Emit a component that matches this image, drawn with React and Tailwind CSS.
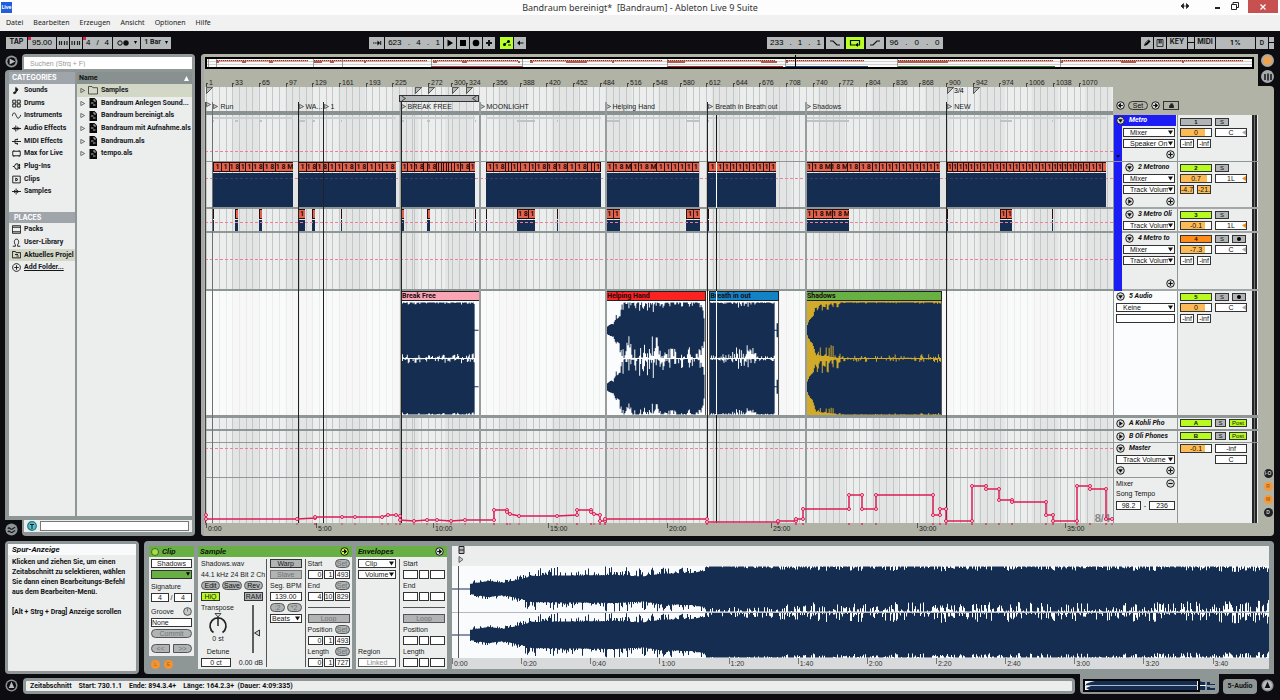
import React, { useState } from 'react';

// timeline units, shared by the overview, the rulers and every lane
const START = 205;
const SPAN = 908;
const at = (x) => `${((x - START) / SPAN) * 100}%`;
const len = (w) => `${(w / SPAN) * 100}%`;

const ones = (n, w = 6.67) => Array(n).fill(w);

const metronomeClips = [
  { from: 213, parts: [8, 7.5, 10, 6, 6.5, 10.5, 13, 18.5] },
  { from: 298, parts: [8, 9.5, 12, 7.5, 6.5, 13, 12.5, 8, 7, 14] },
  { from: 401, parts: [6.5, 7.5, 9.5, 3.5, 10, 2, 2, 2, 2, 2, 2, 3, 5.5, 10, 6.5] },
  { from: 486, parts: [7, 13, 2, 2, 6, 3, 8.5, 6.5, 12, 10, 11.5, 8.5, 12.5, 3, 3, 6] },
  { from: 605, parts: [8, 19, 7, 19, 7.5, ...ones(5)] },
  { from: 708, parts: [8.5, ...ones(9, 6.6)] },
  { from: 805, parts: [7, 20, 16.5, 13, 13, ...ones(10, 6.6)] },
  { from: 946.5, parts: [...ones(5, 5.3), ...ones(12), ...ones(6, 5), ...ones(3), 2.5] },
];

const oliClips = [
  { from: 213, parts: [1] },
  { from: 235, parts: [3.5] },
  { from: 259, parts: [3] },
  { from: 298, parts: [7] },
  { from: 312, parts: [3.5] },
  { from: 341, parts: [1] },
  { from: 401, parts: [3.5] },
  { from: 427, parts: [3.5] },
  { from: 475, parts: [1] },
  { from: 486, parts: [1] },
  { from: 517, parts: [11, 7.5] },
  { from: 557, parts: [1] },
  { from: 605, parts: [7.5, 7.5] },
  { from: 686, parts: [7, 7] },
  { from: 708, parts: [1] },
  { from: 805, parts: [7, 20, 17] },
  { from: 946.5, parts: [1] },
  { from: 999.5, parts: [6.5, 6.5] },
  { from: 1052, parts: [1] },
];

// envelope points: [position, amplitude, roughness]; negative roughness gives peaks instead of dips
const audioClips = [
  {
    name: 'Break Free', from: 400, to: 479.5, bar: 'bg-[#f9a5b6]', fill: 'bg-[#fbfcfd]', mini: 'bg-[#c0394a]', seed: 3,
    env: [[0, 0.02, 0], [0.01, 1, 0.08], [0.5, 1.02, 0.08], [0.94, 1.01, 0.1], [0.95, 0.02, 0], [1, 0.02, 0]],
  },
  {
    name: 'Helping Hand', from: 605, to: 705.5, bar: 'bg-[#fb2222]', fill: 'bg-[#fbfcfd]', mini: 'bg-[#b32025]', seed: 11,
    env: [[0, 0.12, 0.1], [0.03, 0.2, 0.1], [0.07, 0.25, 0.2], [0.09, 0.36, -0.7], [0.14, 0.5, -0.8], [0.16, 1, 0.4], [0.5, 1, 0.4], [0.62, 1.04, 0.2], [0.9, 1.02, 0.2], [0.97, 0.95, 0.2], [0.985, 0.6, 0.3], [1, 0.1, 0]],
  },
  {
    name: 'Breath in out', from: 708.5, to: 779, bar: 'bg-[#1283c6]', fill: 'bg-[#fbfcfd]', mini: 'bg-[#1d4f8f]', seed: 23,
    env: [[0, 1, 0.05], [0.3, 1.02, 0.1], [0.4, 1, 0.25], [0.6, 1, 0.22], [0.7, 1.02, 0.06], [0.93, 1, 0.05], [0.935, 0.02, 0], [0.96, 0.02, 0], [0.965, 0.25, 0], [0.99, 0.25, 0], [1, 0, 0]],
  },
  {
    name: 'Shadows', from: 805, to: 942, bar: 'bg-[#68b043]', fill: 'bg-[#d2ab28]', mini: 'bg-[#2c7a2c]', seed: 37,
    env: [[0, 0.1, 0.1], [0.02, 0.36, 0.1], [0.05, 0.5, -0.3], [0.07, 0.9, 0.25], [0.24, 1, 0.25], [0.25, 1.04, 0.07], [1, 1.02, 0.08]],
  },
];

const locators = [
  { x: 205.5, name: '', line: 'w-px bg-[#444]' },
  { x: 212.5, name: 'Run', line: 'w-px bg-[#6c7272]' },
  { x: 297.5, name: 'WA...', line: 'w-px bg-[#222]' },
  { x: 322.5, name: '1', line: 'w-px bg-[#222]' },
  { x: 399.5, name: 'BREAK FREE', line: 'w-[2px] border-l border-[#9ba0a0] bg-[#222]' },
  { x: 478.5, name: 'MOONLIGHT', line: 'w-[2px] bg-[#979d9d]' },
  { x: 604.5, name: 'Helping Hand', line: 'w-[2px] bg-[#979d9d]' },
  { x: 707.3, name: 'Breath in Breath out', line: 'w-px bg-[#222]' },
  { x: 804.5, name: 'Shadows', line: 'w-[2px] bg-[#979d9d]' },
  { x: 946.3, name: 'NEW', line: 'w-px bg-[#222]' },
];

const bars = [
  [206, 1], [232, 33], [259, 65], [286, 97], [312, 129], [339, 161], [366, 193], [392, 225],
  [428, 272], [451, 300], [466, 324], [493, 356], [520, 388], [546, 420], [573, 452], [600, 484],
  [627, 516], [653, 548], [680, 580], [706, 612], [733, 644], [759, 676], [786, 708], [813, 740],
  [839, 772], [866, 804], [893, 836], [919, 868], [946, 900], [973, 942], [999, 974], [1026, 1006],
  [1053, 1038], [1079, 1070],
];

const times = [[206, '0:00'], [316, '5:00'], [433, '10:00'], [548, '15:00'], [667, '20:00'], [771, '25:00'], [917, '30:00'], [1065, '35:00']];

const signatureMarks = [206, 415, 428, 452, 466, 946.5, 973];

const tempo = [
  [206, 515], [206, 519], [297, 519], [315, 518], [315, 517], [342, 517], [355, 517], [382, 517], [388, 515],
  [396, 515], [400, 516], [400, 520], [414, 521], [427, 520], [437, 520], [451, 521], [465, 520], [494, 520],
  [494, 510], [507, 510], [507, 512], [510, 514], [519, 516], [557, 516], [577, 515], [577, 510], [591, 510],
  [591, 512], [594, 514], [600, 515], [600, 521], [605, 521], [605, 519], [707, 519], [707, 522], [778, 522],
  [778, 521], [796, 521], [796, 519], [803, 519], [803, 509], [849, 509], [849, 495], [862, 495], [862, 509],
  [876, 509], [876, 495], [933, 495], [933, 515], [940, 515], [940, 509], [946, 509], [946, 521], [972, 521],
  [972, 486], [986, 486], [986, 489], [999, 489], [999, 500], [1012, 500], [1012, 502], [1046, 502], [1046, 515],
  [1053, 515], [1053, 521], [1077, 521], [1077, 486], [1090, 486], [1090, 489], [1106, 489], [1106, 519], [1112, 519],
];

// grid restarts at every meter change
const gridLines = [[205.7, 414], [414, 428], [428, 452], [452, 466], [466, 946.5], [946.5, 973.5], [973.5, 1113]].flatMap(([a, b]) => {
  const out = [];
  for (let x = a; x < b - 1; x += 6.667) out.push(x);
  return out;
});

const random = (seed) => {
  let s = seed * 7919 + 17;
  return () => {
    s = (s * 16807) % 2147483647;
    return s / 2147483647;
  };
};

const envelopeAt = (env, t) => {
  let i = 1;
  while (i < env.length - 1 && env[i][0] < t) i += 1;
  const [t0, a0, r0] = env[i - 1];
  const [t1, a1, r1] = env[i];
  const k = Math.min(1, Math.max(0, (t - t0) / (t1 - t0)));
  return [a0 + (a1 - a0) * k, r0 + (r1 - r0) * k];
};

// the edge that faces the other channel is drawn rougher
const wavePath = (env, seed, width, mid, half, inner) => {
  const rnd = random(seed);
  const edge = (amp, rough, k) => {
    const r = rnd();
    const v = rough < 0 ? amp * (1 - rough * r ** 4) : amp * (1 - rough * k * r ** 3);
    return Math.min(1, v) * half;
  };
  let top = '';
  let bottom = '';
  for (let x = 0; x < width; x += 1) {
    const [amp, rough] = envelopeAt(env, x / width);
    const up = mid - edge(amp, rough, inner === 'top' ? 2 : 1);
    const down = mid + edge(amp, rough, inner === 'bottom' ? 2 : 1);
    top += `L${x} ${up.toFixed(1)}L${x + 1} ${up.toFixed(1)}`;
    bottom = `L${x + 1} ${down.toFixed(1)}L${x} ${down.toFixed(1)}${bottom}`;
  }
  return `M0 ${mid}${top}${bottom}Z`;
};

const Waveform = ({ env, seed, width, height, className }) => (
  <svg viewBox={`0 0 ${width} ${height}`} preserveAspectRatio="none" className={className} aria-hidden="true">
    <path d={wavePath(env, seed, width, height / 4, height / 4 - 0.5, 'bottom')} fill="#142d50" />
    <path d={wavePath(env, seed, width, (height * 3) / 4, height / 4 - 0.5, 'top')} fill="#142d50" />
  </svg>
);

const Fold = ({ dir = 'down', label, fill = '#d4d7d7' }) => (
  <button aria-label={label} className="size-[9px] shrink-0">
    <svg viewBox="0 0 10 10" className="size-full">
      <circle cx="5" cy="5" r="4.2" fill={fill} stroke="#1b1b1b" strokeWidth="1.1" />
      {dir === 'down' && <path d="M2.4 3.6h5.2L5 7.6z" fill="#111" />}
      {dir === 'right' && <path d="M3.6 2.4v5.2L7.6 5z" fill="#111" />}
      {dir === 'plus' && <path d="M5 2.5v5M2.5 5h5" stroke="#111" strokeWidth="1.2" />}
      {dir === 'minus' && <path d="M2.5 5h5" stroke="#111" strokeWidth="1.2" />}
      {dir === 'arrow' && <path d="M2.3 5h4M5 2.8L7.4 5 5 7.2z" stroke="#111" strokeWidth="1" fill="#111" />}
      {dir === 'back' && <path d="M7.7 5h-4M5 2.8L2.6 5 5 7.2z" stroke="#111" strokeWidth="1" fill="#111" />}
    </svg>
  </button>
);

const Select = ({ value, label, className = '' }) => (
  <div className={`relative h-[9px] ${className}`}>
    <select aria-label={label} className="block h-full w-full appearance-none border border-[#333] bg-white px-1.5 leading-[7px]">
      <option>{value}</option>
    </select>
    <svg viewBox="0 0 6 6" className="pointer-events-none absolute top-[2px] right-[2px] size-[5px]">
      <path d="M0 0.5h6L3 5.5z" fill="#111" />
    </svg>
  </div>
);

const Field = ({ value = '', label, tone = 'bg-white', className = '' }) => (
  <input aria-label={label} defaultValue={value} className={`h-[9px] min-w-0 border border-[#333] leading-[7px] ${tone} ${className}`} />
);

/* ---------- top bars ---------- */

const TitleBar = () => (
  <header className="flex h-[15px] items-center bg-[#fdfdfd] font-['Noto_Sans',sans-serif]">
    <div className="flex-1">
      <span className="ml-px flex h-[11px] w-[11px] items-center justify-center bg-[#1f5fdc] text-[5px] font-bold text-white">Live</span>
    </div>
    <h1 className="text-[9px] leading-[15px] whitespace-pre text-[#333]">{'Bandraum bereinigt*  [Bandraum] - Ableton Live 9 Suite'}</h1>
    <div className="flex flex-1 items-start justify-end self-stretch">
      <svg viewBox="0 0 8 6" className="mt-[3px] mr-[26px] h-[6px] w-[8px]"><path d="M0 3l2.5-2.500v5zM8 3L5.500.5v5zM2 3h4" fill="#222" stroke="#222" strokeWidth="0.8" /></svg>
      <button aria-label="Minimieren" className="mt-[7px] mr-[11px] h-[2px] w-[5px] bg-[#222]" />
      <button aria-label="Wiederherstellen" className="mt-[2px] mr-[9px] size-[8px]">
        <svg viewBox="0 0 8 8"><path d="M.5 2.500h5v5h-5zM2 2V.5h5.500v5H6" fill="none" stroke="#222" /></svg>
      </button>
      <button aria-label="Schließen" className="mr-[2px] flex h-[13px] w-[30px] items-center justify-center bg-[#c75050]">
        <svg viewBox="0 0 6 6" className="size-[6px]"><path d="M.5.5l5 5M5.500.5l-5 5" stroke="#fff" strokeWidth="1.2" /></svg>
      </button>
    </div>
  </header>
);

const MenuBar = () => (
  <nav className="flex h-4 items-center gap-[10px] bg-[#f1f1f1] pl-1.5 font-['Noto_Sans',sans-serif] text-[7px] text-[#1a1a1a]">
    {['Datei', 'Bearbeiten', 'Erzeugen', 'Ansicht', 'Optionen', 'Hilfe'].map((m) => (
      <button key={m}>{m}</button>
    ))}
  </nav>
);

const Cell = ({ className = '', children, ...rest }) => (
  <button className={`flex h-3 shrink-0 items-center justify-center text-[#15171a] ${className}`} {...rest}>
    {children}
  </button>
);

const Digits = ({ values, className }) => (
  <div className={`flex h-3 shrink-0 items-center justify-around bg-[#b5b9ba] text-[8px] ${className}`}>
    {values.map((v, i) => (
      <span key={i}>{v}</span>
    ))}
  </div>
);

const Transport = () => {
  const [loop, setLoop] = useState(true);
  const grey = 'bg-[#b5b9ba]';
  return (
    <div className="flex h-[22px] items-center pt-[1px] pr-1.5 pl-1.5 text-[8px]">
      <div className="flex gap-px">
        <Cell className={`${grey} w-[21px] font-['Inter',sans-serif] text-[7px] font-bold`}>TAP</Cell>
        <label className="relative">
          <input aria-label="Tempo" defaultValue="95.00" className="block h-3 w-[28px] bg-[#b5b9ba] pl-[4px] text-[8px]" />
          <i className="absolute top-0 left-0 size-[3px] bg-[#d8214f]" />
        </label>
        <Cell className={`${grey} w-3`} aria-label="Nudge Down"><svg viewBox="0 0 12 12" className="size-3"><path d="M2.500 4v4M4.500 4v4M7.500 4v4M10 4v4" stroke="#222" strokeWidth="1.200" /></svg></Cell>
        <Cell className={`${grey} w-3`} aria-label="Nudge Up"><svg viewBox="0 0 12 12" className="size-3"><path d="M2 4v4M4.500 4v4M7.500 4v4M9.500 4v4" stroke="#222" strokeWidth="1.200" /></svg></Cell>
        <div className="relative">
          <Digits values={['4', '/', '4']} className="w-[29px]" />
          <i className="absolute top-0 left-0 size-[3px] bg-[#d8214f]" />
        </div>
        <Cell className={`${grey} w-[27px] gap-[5px]`} aria-label="Metronom">
          <svg viewBox="0 0 12 6" className="h-[6px] w-[12px]"><circle cx="3" cy="3" r="2.200" fill="none" stroke="#111" /><circle cx="9" cy="3" r="2.700" fill="#111" /></svg>
          <svg viewBox="0 0 6 6" className="size-[3px]"><path d="M0 0h6L3 6z" /></svg>
        </Cell>
        <Cell className={`${grey} w-[30px] gap-[4px] font-['Roboto',sans-serif] text-[7px] font-bold`}>
          1 Bar<svg viewBox="0 0 6 6" className="size-[3px]"><path d="M0 0h6L3 6z" /></svg>
        </Cell>
      </div>
      <div className="flex-[198]" />
      <div className="flex gap-px">
        <Cell className={`${grey} w-[15px]`} aria-label="Follow"><svg viewBox="0 0 10 8" className="h-2 w-[10px]"><path d="M1 4h5" stroke="#111" strokeDasharray="1.500 .6" /><path d="M5.500 1.500L8 4 5.500 6.500z" /><path d="M8.700 2v4" stroke="#111" /></svg></Cell>
        <Digits values={['623', '.', '4', '.', '1']} className="w-[58px]" />
        <Cell className={`${grey} w-[12px]`} aria-label="Play"><svg viewBox="0 0 8 8" className="size-2"><path d="M1.500.5v7L7 4z" /></svg></Cell>
        <Cell className={`${grey} w-[12px]`} aria-label="Stop"><svg viewBox="0 0 8 8" className="size-2"><path d="M1 1h6v6H1z" /></svg></Cell>
        <Cell className={`${grey} w-[12px]`} aria-label="Record"><svg viewBox="0 0 8 8" className="size-2"><circle cx="4" cy="4" r="3.300" /></svg></Cell>
        <Cell className={`${grey} w-[12px]`} aria-label="Overdub"><svg viewBox="0 0 8 8" className="size-2"><path d="M4 1v6M1 4h6" stroke="#111" strokeWidth="2" /></svg></Cell>
        <Cell className="ml-1 w-[13px] bg-[#b6ff29]" aria-label="Automation Arm"><svg viewBox="0 0 10 8" className="h-2 w-[10px]"><path d="M2 5.500L6.500 2.500" stroke="#111" strokeWidth=".8" /><circle cx="2.500" cy="5.500" r="1.500" /><circle cx="6.500" cy="2.500" r="1.500" /><path d="M6 6h3" stroke="#111" /></svg></Cell>
        <Cell className={`${grey} w-[12px]`} aria-label="Automation Re-Enable"><svg viewBox="0 0 8 8" className="size-2"><path d="M7.500 4H3" stroke="#111" /><path d="M4 1.500L1 4l3 2.500z" /></svg></Cell>
      </div>
      <div className="flex-[241]" />
      <div className="flex gap-0.5">
        <Digits values={['233', '.', '1', '.', '1']} className="w-[57px]" />
        <Cell className={`${grey} w-[18px]`} aria-label="Punch In"><svg viewBox="0 0 12 6" className="h-[6px] w-3"><path d="M1 1h3l4 4h3" fill="none" stroke="#111" strokeWidth="1.200" /></svg></Cell>
        <Cell className={`${loop ? 'bg-[#b6ff29]' : 'bg-[#b5b9ba]'} w-[18px]`} aria-label="Loop" onClick={() => setLoop(!loop)}>
          <svg viewBox="0 0 12 8" className="h-2 w-3"><path d="M6 6H1.500V1.500h9V6H8" fill="none" stroke="#111" strokeWidth="1.200" /><path d="M9 3.800v4L5.800 6z" /></svg>
        </Cell>
        <Cell className={`${grey} w-[18px]`} aria-label="Punch Out"><svg viewBox="0 0 12 6" className="h-[6px] w-3"><path d="M1 5h3l4-4h3" fill="none" stroke="#111" strokeWidth="1.200" /></svg></Cell>
        <Digits values={['96', '.', '0', '.', '0']} className="w-[57px]" />
      </div>
      <div className="flex-[198]" />
      <div className="flex items-center gap-px font-['Inter',sans-serif] text-[7px] font-bold">
        <Cell className={`${grey} w-3`} aria-label="Draw"><svg viewBox="0 0 8 8" className="size-2"><path d="M1 7l1-3 3.500-3.500 2 2L4 6z" /><path d="M2.500 4.500L5.500 1.700" stroke="#ccc" strokeWidth=".6" /></svg></Cell>
        <Cell className={`${grey} w-3`} aria-label="Computer MIDI Keyboard"><svg viewBox="0 0 8 8" className="size-2"><path d="M1 .5h6v7H1z" fill="none" stroke="#111" strokeWidth=".8" /><path d="M3.200.5v4M5 .5v4" stroke="#111" strokeWidth="1.200" /></svg></Cell>
        <Cell className={`${grey} w-5`}>KEY</Cell>
        <div className="flex w-[6px] flex-col gap-px"><i className="h-[5px] bg-[#b5b9ba]" /><i className="h-[6px] bg-[#b5b9ba]" /></div>
        <Cell className={`${grey} w-5`}>MIDI</Cell>
        <div className="flex h-3 w-[39px] items-center justify-center bg-[#b5b9ba] text-[6px]">1 %</div>
        <Cell className={`${grey} w-3 text-[6px]`}>D</Cell>
        <div className="flex w-[5px] flex-col gap-px"><i className="h-[5px] bg-[#b5b9ba]" /><i className="h-[6px] bg-[#b5b9ba]" /></div>
      </div>
    </div>
  );
};

/* ---------- browser ---------- */

const categoryIcons = {
  Sounds: <path d="M5 9V2l3 2.500-1 2M5 9c0 1.300-3 1.700-3 .2S5 7.300 5 9z" fill="#111" />,
  Drums: <path d="M1 1.500h4v4H1zM7 1.500h4v4H7zM1 6.700h4v4H1zM7 6.700h4v4H7z" />,
  Instruments: <path d="M0 7c2-6 3.500-6 5.500-1S9 11 12 5" />,
  'Audio Effects': <path d="M0 6h12M3 4v4M5 2v8M7 3.500v5M9 4.500v3" />,
  'MIDI Effects': <path d="M0 6h12M4 3.500h4M4 8.500h4M4 3.500v5M7 2v2M7 8v2.500" />,
  'Max for Live': <path d="M1 3h10v6H1zM2.500 1.500V3M9.500 1.500V3M2.500 9v1.500M9.500 9v1.500" />,
  'Plug-Ins': <path d="M1 6h2l2-3.500h3v7H5L3 6M8 4.200h3M8 7.800h3M10 2.500v7" />,
  Clips: <path d="M1 1.500h10v9H1zM5 4v4l3-2z" />,
  Samples: <path d="M0 6h12M3.500 4v4M5.500 2v8M7.500 4v4" />,
  Packs: <path d="M.5 1h11v10H.5zM.5 3h11M.5 9h11" />,
  'User-Library': <path d="M1 11h3.500V9C2.500 7 2.500 1.500 6 1.500S9.500 7 7.500 9v2H11" />,
  'Aktuelles Projel': <path d="M.5 2h4l1 1.500h6V10.500H.5zM4 6h4M6 8h3" />,
  'Add Folder...': <path d="M6 3v6M3 6h6M6 .8a5.200 5.200 0 1 0 .01 0z" />,
};

const BrowserRow = ({ name, selected, underline }) => (
  <li className={`flex flex-1 items-center ${selected ? 'bg-[#d3d7c6]' : ''}`}>
    <a href="#browser" className="flex items-center gap-[3px] pl-[3px] whitespace-nowrap">
      <svg viewBox="0 0 12 12" className="size-[9px] shrink-0" fill="none" stroke="#111" strokeWidth="1.200">{categoryIcons[name]}</svg>
      <span className={underline ? 'underline' : ''}>{name}</span>
    </a>
  </li>
);

const files = ['Samples', 'Bandraum Anlegen Sound...', 'Bandraum bereinigt.als', 'Bandraum mit Aufnahme.als', 'Bandraum.als', 'tempo.als'];

const Browser = () => (
  <aside className="flex w-[190px] shrink-0 flex-col font-['Roboto',sans-serif] text-[7px] font-bold text-[#14161a]">
    <div className="flex h-[16px]">
      <button aria-label="Browser ausblenden" className="mt-[-1px] w-[17px]">
        <svg viewBox="0 0 14 14" className="size-[13px]"><circle cx="7" cy="7" r="6.500" fill="#8d9494" /><circle cx="7" cy="7" r="4.800" fill="#0d0c11" stroke="#bbb" strokeWidth=".6" /><path d="M5 3.800v6.400L11 7z" fill="#b9bdbd" /></svg>
      </button>
      <div className="flex-1 rounded-t bg-[#929998] pt-[3px] pr-[3px] pl-[2px]">
        <input aria-label="Suchen" placeholder="Suchen (Strg + F)" className="block h-3 w-full bg-white pl-[6px] font-['Liberation_Sans',sans-serif] font-normal placeholder:text-[#999]" />
      </div>
    </div>
    <div className="flex flex-1 gap-[2px] rounded-tl bg-[#8f9796] pt-[2px] pr-[3px] pb-[4px] pl-[4px]">
      <div className="flex w-[66px] flex-col bg-[#eceeee]">
        <h2 className="h-3 bg-[#a0a5ab] pl-[3px] font-['Inter',sans-serif] leading-3 text-white">CATEGORIES</h2>
        <ul className="flex h-[114px] flex-col">
          {['Sounds', 'Drums', 'Instruments', 'Audio Effects', 'MIDI Effects', 'Max for Live', 'Plug-Ins', 'Clips', 'Samples'].map((n) => (
            <BrowserRow key={n} name={n} />
          ))}
        </ul>
        <h2 className="mt-[14px] h-[11px] bg-[#a0a5ab] pl-[5px] font-['Inter',sans-serif] leading-[11px] text-white">PLACES</h2>
        <ul className="flex h-[51px] flex-col">
          <BrowserRow name="Packs" />
          <BrowserRow name="User-Library" />
          <BrowserRow name="Aktuelles Projel" selected />
          <BrowserRow name="Add Folder..." underline />
        </ul>
      </div>
      <div className="flex min-w-0 flex-1 flex-col bg-[#eceeee]">
        <h2 className="flex h-3 items-center justify-between bg-[#899190] pr-[3px] pl-[2px] text-[#111]">
          Name
          <svg viewBox="0 0 6 6" className="size-[5px]"><path d="M3 0l3 6H0z" fill="#fff" /></svg>
        </h2>
        <ul className="flex h-[76px] flex-col">
          {files.map((f, i) => (
            <li key={f} className={`flex flex-1 items-center gap-[3px] pl-[3px] whitespace-nowrap ${i === 0 ? 'bg-[#d3d7c6]' : ''}`}>
              <svg viewBox="0 0 6 6" className="size-[5px] shrink-0"><path d="M1 .5v5L5.500 3z" fill="none" stroke="#444" strokeWidth=".9" /></svg>
              <svg viewBox="0 0 10 10" className="size-[10px] shrink-0">
                {i === 0
                  ? <path d="M.5 1.500h3.500l.8 1.200h4.700V9H.5z" fill="none" stroke="#333" strokeWidth=".8" />
                  : <><path d="M1.500 0H6.500L9 2.500V10H1.500z" fill="#0a0a0a" /><path d="M3 5h2.500M5 7h2.500M6 1v2h2" stroke="#ddd" strokeWidth=".8" fill="none" /></>}
              </svg>
              <a href="#file">{f}</a>
            </li>
          ))}
        </ul>
      </div>
    </div>
    <div className="flex h-[16px]">
      <button aria-label="Groove Pool" className="w-[17px] pt-[2px]">
        <svg viewBox="0 0 14 14" className="size-[13px]"><circle cx="7" cy="7" r="6.500" fill="#8d9494" /><path d="M3 6c2-2.500 3 2 5 .5S10 4.500 11 5M3 9.500c2-2.500 3 2 5 .5s2-2 3-1.500" fill="none" stroke="#111" strokeWidth="1.200" /></svg>
      </button>
      <div className="flex-1 rounded-b bg-[#8f9796] pr-[3px] pb-[3px] pl-[2px]">
        <div className="flex h-3 items-center gap-[3px] bg-[#eceeee] px-[3px]">
          <svg viewBox="0 0 10 10" className="size-[10px]"><circle cx="5" cy="5" r="4.300" fill="#5fc0c4" stroke="#167a80" strokeWidth="1.200" /><path d="M3 3.500h4M5 3.500V8" stroke="#114" strokeWidth="1" /></svg>
          <input aria-label="Vorhören" className="h-[10px] min-w-0 flex-1 border border-[#777] bg-white" />
        </div>
      </div>
    </div>
  </aside>
);

/* ---------- arrangement ---------- */

const total = (parts) => parts.reduce((a, b) => a + b, 0);

const MidiClip = ({ from, parts }) => (
  <div className="absolute inset-y-0 flex flex-col" style={{ left: at(from), width: len(total(parts)) }}>
    <div className="flex h-[10px] overflow-hidden bg-[#180808]">
      {parts.map((w, i) => (
        <span
          key={i}
          className="flex justify-center overflow-hidden border-y border-l border-[#2a0d0a] bg-[#e2634d] font-['Roboto',sans-serif] text-[7px] leading-[9px] font-bold whitespace-pre text-[#240806]"
          style={{ flex: `${w} 0 0px` }}
        >
          {w >= 15 ? '1 8 M' : w >= 9 ? '1 8' : w >= 5 ? '1' : ''}
        </span>
      ))}
    </div>
    <div className="mt-px flex-1 bg-[#142d50]" />
  </div>
);

const AudioClip = ({ name, from, to, bar, fill, env, seed }) => (
  <div className="absolute inset-y-0 flex flex-col" style={{ left: at(from), width: len(to - from) }}>
    <div className={`h-[10px] border border-[#222] pl-px font-['Roboto',sans-serif] text-[7px] leading-[9px] font-bold whitespace-nowrap text-[#1a0c10] ${bar}`}>{name}</div>
    <div className={`min-h-0 flex-1 border-x border-[#555] pt-px ${fill}`}>
      <Waveform env={env} seed={seed} width={Math.round(to - from)} height={112} className="h-full w-full" />
    </div>
  </div>
);

const Dashes = ({ className }) => (
  <div className={`absolute inset-x-0 h-px bg-[repeating-linear-gradient(90deg,#ee7f9b_0_3px,transparent_3px_5px)] ${className}`} />
);

const Overview = () => (
  <div className="relative h-3 border-2 border-black bg-[repeating-linear-gradient(#f8f8f8_0_2px,#cfd1d1_2px_3px)]">
    {metronomeClips.map((c) => (
      <div key={c.from} className="absolute top-[1px] h-[2px] border-t border-dotted border-[#7c3a32] bg-[#dba49b]" style={{ left: at(c.from), width: len(total(c.parts)) }} />
    ))}
    {oliClips.map((c) => (
      <div key={c.from} className="absolute top-[2px] h-[2px] bg-[#b05a50]" style={{ left: at(c.from), width: len(Math.max(2, total(c.parts))) }} />
    ))}
    {audioClips.map((c) => (
      <div key={c.name} className={`absolute bottom-0 h-[1px] ${c.mini}`} style={{ left: at(c.from), width: len(c.to - c.from) }} />
    ))}
    {locators.map((l) => (
      <i key={l.x} className="absolute inset-y-0 w-px bg-[#777]/70" style={{ left: at(l.x) }} />
    ))}
    <i className="absolute -top-1 -bottom-px w-px bg-black" style={{ left: at(716) }} />
  </div>
);

const Rulers = () => (
  <>
    <div className="relative h-[10px] text-[7px] leading-[9px] text-[#222]">
      {bars.map(([x, n]) => (
        <span key={n} className="absolute bottom-0 pl-[3px]" style={{ left: at(x) }}>
          <i className="absolute bottom-0 left-0 h-[4px] w-[2px] border-t border-l border-[#444]" />
          {n}
        </span>
      ))}
    </div>
    <div className="relative h-[8px]">
      {signatureMarks.map((x) => (
        <svg key={x} viewBox="0 0 8 8" className="absolute top-0 size-[7px]" style={{ left: at(x) }}><path d="M.5.5h7L.5 7.500z" fill="#b5b8b8" stroke="#333" strokeWidth=".9" /></svg>
      ))}
      <span className="absolute top-0 text-[7px] leading-2" style={{ left: at(954) }}>3/4</span>
    </div>
    <div className="relative h-[7px]">
      <div className="absolute inset-y-0 flex items-center justify-between border border-[#333] bg-[#b3b6b6] px-px" style={{ left: at(399), width: len(80) }}>
        <svg viewBox="0 0 5 5" className="size-[5px]"><path d="M.5 0l4 2.500-4 2.500" fill="none" stroke="#222" strokeWidth=".8" /></svg>
        <svg viewBox="0 0 5 5" className="size-[5px]"><path d="M4.500 0l-4 2.500 4 2.500" fill="none" stroke="#222" strokeWidth=".8" /></svg>
      </div>
    </div>
    <div className="relative h-[9px] text-[7px] leading-[9px] text-[#1c1c1c]">
      {locators.map((l) => (
        <div key={l.x} className="absolute top-0 flex items-center gap-[2px] pl-px whitespace-nowrap" style={{ left: at(l.x) }}>
          <svg viewBox="0 0 6 6" className="size-[5px]"><path d="M.5.3v5.400L5.500 3z" fill="#c5c8c8" stroke="#333" strokeWidth=".8" /></svg>
          {l.name}
        </div>
      ))}
    </div>
    <div className="relative h-[4px] bg-[#8a9291]" />
  </>
);

const Grid = () => (
  <svg viewBox={`${START} 0 ${SPAN} 10`} preserveAspectRatio="none" className="absolute inset-0 h-full w-full" aria-hidden="true">
    <rect x={START} y="0" width={SPAN} height="10" fill="#eceeee" />
    {Array.from({ length: 17 }, (_, i) => (
      <rect key={i} x={232 + i * 53.3} y="0" width="26.700" height="10" fill="#e3e5e5" />
    ))}
    {gridLines.map((x) => (
      <rect key={x} x={Math.round(x)} y="0" width="1" height="10" fill="#c4c7c7" />
    ))}
  </svg>
);

const TempoCurve = () => (
  <div className="relative h-[45px]">
    <span className="absolute right-[3px] bottom-0 text-[11px] leading-[10px] font-bold text-[#888]">8/4</span>
    <svg viewBox={`${START} 478 ${SPAN} 45`} preserveAspectRatio="none" className="relative block h-full w-full overflow-visible" aria-hidden="true">
      <path d={`M${tempo.map((p) => p.join(' ')).join('L')}`} fill="none" stroke="#dc1c55" strokeWidth="1.500" />
      {tempo.map(([x, y], i) => (
        <g key={i}>
          <circle cx={x} cy={y} r="1.500" fill="#f3d9e0" stroke="#dc1c55" strokeWidth="1" />
          <path d={`M${x} 523v2`} stroke="#dc1c55" strokeWidth=".8" />
        </g>
      ))}
    </svg>
  </div>
);

const lane = 'relative border-[#8f9696]';

const Timeline = () => (
  <div className="min-w-0 flex-1">
    <div className="relative">
      <div className="absolute inset-x-0 top-[10px] bottom-0"><Grid /></div>
      <Rulers />
      <div className={`${lane} h-[47px] border-b`}>
        {metronomeClips.map((c) => (
          <i key={c.from} className="absolute top-[2px] h-[2px] bg-[#cdd0d0]" style={{ left: at(c.from), width: len(total(c.parts)) }} />
        ))}
        {oliClips.map((c) => (
          <i key={c.from} className="absolute top-[5px] h-[2px] bg-[#bfc2c2]" style={{ left: at(c.from), width: len(total(c.parts)) }} />
        ))}
        <Dashes className="top-[36px]" />
      </div>
      <div className={`${lane} h-[47px] border-b-2`}>
        <Dashes className="top-[16px]" />
        {metronomeClips.map((c) => <MidiClip key={c.from} {...c} />)}
        <Dashes className="top-[16px] opacity-20" />
      </div>
      <div className={`${lane} h-[24px] border-b-2`}>
        {oliClips.map((c) => <MidiClip key={c.from} {...c} />)}
        <Dashes className="top-[13px]" />
      </div>
      <div className={`${lane} h-[58px] border-b-2`}>
        <Dashes className="top-[26px]" />
      </div>
      <div className={`${lane} h-[127px] border-b-[3px] bg-white/70`}>
        {audioClips.map((c) => <AudioClip key={c.name} {...c} />)}
      </div>
      <div className={`${lane} h-[13px] border-b-2`} />
      <div className={`${lane} h-[12px] border-b`} />
      <div className={`${lane} h-[35px] border-b`}>
        <Dashes className="top-[5px]" />
      </div>
      {locators.map((l) => (
        <i key={l.x} className={`absolute top-[25px] bottom-0 ${l.line}`} style={{ left: at(l.x) }} />
      ))}
      <i className="absolute top-[38px] bottom-0 w-px bg-[#1c1c1c]" style={{ left: at(716) }} />
      <i className="absolute top-[214px] h-[124px] w-px bg-white" style={{ left: at(716) }} />
      <i className="absolute top-[85px] h-[46px] w-px bg-white" style={{ left: at(716) }} />
      <TempoCurve />
    </div>
    <div className="relative h-[13px] text-[7px] leading-[11px] text-[#222]">
      {times.map(([x, t]) => (
        <span key={t} className="absolute top-0 pl-[2px]" style={{ left: at(x) }}>
          <i className="absolute top-0 left-0 h-[5px] w-px bg-[#555]" />
          {t}
        </span>
      ))}
    </div>
  </div>
);

const TrackButton = ({ className = '', children, ...rest }) => (
  <button className={`flex h-[8px] items-center justify-center border border-[#333] text-[6px] leading-[6px] ${className}`} {...rest}>{children}</button>
);

const Mixer = ({ id, color, solo = true, arm, volume, level = '80%', pan, panColor = '#aaa', sends }) => (
  <div className="flex w-[73px] shrink-0 flex-col gap-[2px] bg-[#eceeee] pt-px pl-[2px]">
    <div className="flex h-[9px] items-center">
      <TrackButton className={`w-[32px] font-bold ${color}`}>{id}</TrackButton>
      {solo && <TrackButton className="ml-[3px] w-[14px] bg-[#b0b4b5]">S</TrackButton>}
      {arm && <TrackButton aria-label="Aufnahme" className="ml-[3px] w-[14px] bg-[#b0b4b5]"><i className="size-[4px] rounded-full bg-black" /></TrackButton>}
    </div>
    {volume && (
      <div className="flex h-[9px] gap-[3px]">
        <div className="relative h-[9px] w-[32px] border border-[#333] bg-white">
          <i className="absolute inset-y-0 left-0 bg-[#fdbb55]" style={{ width: level }} />
          <input aria-label="Volume" defaultValue={volume} className="relative block h-[7px] w-full text-center leading-[7px]" />
        </div>
        <div className="relative h-[9px] w-[32px] border border-[#333] bg-white">
          <input aria-label="Pan" defaultValue={pan} className="block h-[7px] w-full text-center leading-[7px]" />
          <svg viewBox="0 0 5 6" className="absolute top-px right-0 h-[5px] w-[4px]"><path d="M5 0v6L0 3z" fill={panColor} /></svg>
        </div>
      </div>
    )}
    {sends && (
      <div className="flex h-[9px] gap-[3px]">
        {sends.map((s, i) => (
          <Field key={i} label={`Send ${i + 1}`} value={s} tone={s === '-inf' ? 'bg-white' : 'bg-[#fdbb55]'} className="w-[14px] text-center" />
        ))}
      </div>
    )}
  </div>
);

const Meter = () => (
  <div className="flex w-[7px] shrink-0 flex-col bg-[#eceeee] pl-px">
    <div className="w-[5px] flex-1 border-x-2 border-[#242626] bg-[#6e7272]" />
  </div>
);

const TrackName = ({ name, dir = 'down', className = '' }) => (
  <div className={`flex h-[9px] items-center gap-[4px] font-['Roboto',sans-serif] font-bold whitespace-nowrap italic ${className}`}>
    <Fold dir={dir} label={`${name} einklappen`} />
    {name}
  </div>
);

const tracks = [
  {
    name: '2 Metrono', height: 'h-[47px] border-b-2', selects: ['Mixer', 'Track Volume'], footer: true, unfold: true,
    mixer: { id: '2', color: 'bg-[#b7fb20]', volume: '0.7', pan: '1L', panColor: '#f08a1d', level: '85%', sends: ['-4.7', '-21.'] },
  },
  {
    name: '3 Metro Oli', height: 'h-[24px] border-b-2', selects: ['Track Volume'],
    mixer: { id: '3', color: 'bg-[#b7fb20]', volume: '-0.1', pan: '1L', panColor: '#f08a1d' },
  },
  {
    name: '4 Metro to', height: 'h-[58px] border-b-2', selects: ['Mixer', 'Track Volume'], footer: true,
    mixer: { id: '4', color: 'bg-[#ff8c1a]', arm: true, volume: '-7.3', pan: 'C', sends: ['-inf', '-inf'] },
  },
];

const TrackHeaders = () => (
  <div className="w-[145px] shrink-0 text-[7px] leading-[9px] text-[#111]">
    <div className="flex h-[38px] items-center gap-[3px] pt-[18px] pl-[3px]">
      <Fold dir="back" label="Vorheriger Locator" />
      <button className="h-[9px] w-[20px] rounded-full border border-[#333] leading-[7px]">Set</button>
      <Fold dir="arrow" label="Nächster Locator" />
      <button aria-label="Sperren" className="flex h-[9px] w-[16px] items-center justify-center border border-[#333]">
        <svg viewBox="0 0 6 6" className="size-[5px]"><path d="M.5 3h5v3h-5zM2 3V1h2.500v2" fill="#222" stroke="#222" strokeWidth=".8" /></svg>
      </button>
    </div>
    <div className="border-l border-[#8f9696]">
      <div className="flex h-[47px] border-b border-[#8f9696]">
        <div className="flex w-[63px] flex-col bg-[#eceeee] pr-px">
          <TrackName name="Metro" className="h-[11px] shrink-0 bg-[#1c1cf5] pl-[2px] text-white" />
          <div className="flex flex-1">
            <div className="w-[8px] bg-[#1c1cf5] pt-[29px]"><svg viewBox="0 0 6 4" className="mx-auto h-[3px] w-[4px]"><path d="M0 0h6L3 4z" /></svg></div>
            <div className="flex min-w-0 flex-1 flex-col gap-[2px] pt-[2px] pr-px pl-px">
              <Select value="Mixer" label="Gerät" />
              <Select value="Speaker On" label="Parameter" />
              <div className="flex justify-end"><Fold dir="plus" label="Spur hinzufügen" /></div>
            </div>
          </div>
        </div>
        <div className="flex border-l border-[#8f9696]">
          <div className="bg-[#eceeee] pt-px"><Mixer id="1" color="bg-[#b0b4b5]" volume="0" pan="C" sends={['-inf', '-inf']} /></div>
          <Meter />
        </div>
      </div>
      {tracks.map((t) => (
        <div key={t.name} className={`flex border-[#a2a8a8] ${t.height}`}>
          <div className="-mb-[2px] w-[8px] shrink-0 bg-[#1c1cf5]" />
          <div className="flex w-[55px] min-w-0 flex-col gap-[2px] bg-[#eceeee] pt-px pr-[2px] pl-px">
            <TrackName name={t.name} className="pl-[2px]" />
            {t.selects.map((s, i) => <Select key={i} value={s} label={`${t.name} ${i}`} />)}
            {t.footer && (
              <div className="mt-auto flex justify-between pb-px pl-[2px]">
                {t.unfold ? <Fold dir="right" label="Automation ausklappen" /> : <span />}
                <Fold dir="plus" label="Spur hinzufügen" />
              </div>
            )}
          </div>
          <div className="flex border-l border-[#8f9696]">
            <Mixer {...t.mixer} />
            <Meter />
          </div>
        </div>
      ))}
      <div className="flex h-[127px] border-b-[3px] border-[#8f9696]">
        <div className="flex w-[63px] flex-col gap-[2px] bg-[#fbfcfd] pt-px pr-[2px] pl-[2px]">
          <TrackName name="5 Audio" />
          <Select value="Keine" label="Gerät" />
          <Field label="Parameter" />
        </div>
        <div className="flex border-l border-[#8f9696]">
          <Mixer id="5" color="bg-[#b7fb20]" arm volume="0" pan="C" sends={['-inf', '-inf']} />
          <Meter />
        </div>
      </div>
      {[['A Kohli Pho', 'A', 'h-[13px] border-b-2'], ['B Oli Phones', 'B', 'h-[12px] border-b']].map(([name, id, size]) => (
        <div key={id} className={`flex border-[#8f9696] ${size}`}>
          <div className="w-[63px] bg-[#eceeee] pt-px pl-[2px]"><TrackName name={name} dir="right" /></div>
          <div className="flex border-l border-[#8f9696] bg-[#eceeee]">
            <div className="flex w-[73px] pt-px pl-[2px]">
              <TrackButton className="w-[32px] bg-[#b7fb20] font-bold">{id}</TrackButton>
              <TrackButton className="ml-[3px] w-[11px] bg-[#b0b4b5]">S</TrackButton>
              <TrackButton className="ml-[3px] w-[18px] bg-[#b7fb20]">Post</TrackButton>
            </div>
            <Meter />
          </div>
        </div>
      ))}
      <div className="flex h-[80px]">
        <div className="w-[63px] bg-[#eceeee]">
          <div className="flex h-[35px] flex-col gap-[2px] border-b border-[#8f9696] pt-px pr-[2px] pl-[2px]">
            <TrackName name="Master" />
            <Select value="Track Volume" label="Master Parameter" />
            <div className="flex justify-between"><Fold label="Automation" /><Fold dir="plus" label="Spur hinzufügen" /></div>
          </div>
          <div className="pt-px pr-[2px] pl-[2px] text-[7px]">
            <div className="flex items-center justify-between">Mixer<Fold dir="minus" label="Spur entfernen" /></div>
            <p className="pt-px">Song Tempo</p>
            <div className="flex items-center justify-between pt-[3px]">
              <Field value="98.2" label="Tempo Minimum" className="w-[25px] text-center" />-
              <Field value="236" label="Tempo Maximum" className="w-[26px] text-center" />
            </div>
          </div>
        </div>
        <div className="flex border-l border-[#8f9696]">
          <div className="flex w-[73px] flex-col gap-[2px] bg-[#eceeee] pt-px pl-[2px]">
            <div className="flex gap-[3px]">
              <Field value="-0.1" label="Master Volume" tone="bg-linear-to-r from-[#fdbb55] from-80% to-white to-80%" className="w-[32px] text-center" />
              <Field value="-inf" label="Cue Volume" className="w-[32px] text-center" />
            </div>
            <Field value="C" label="Master Pan" className="ml-[35px] w-[32px] text-center" />
          </div>
          <Meter />
        </div>
      </div>
    </div>
  </div>
);

const sideToggles = [['I·O', 'bg-[#1f2224] text-[#ccc]'], ['R', 'bg-[#f59a3c] text-[#b06010]'], ['M', 'bg-[#f59a3c] text-[#b06010]'], ['D', 'bg-[#1f2224] text-[#ccc]']];

const Arrangement = () => (
  <main className="flex min-w-0 flex-1">
    <div className="min-w-0 flex-1 rounded-l bg-[#b1b3a6]">
      <div className="h-full rounded-l border-l-[3px] border-[#a5a8a6] pl-px">
        <div className="mr-[4px] pt-[3px]"><Overview /></div>
        <div className="flex pt-[8px]">
          <Timeline />
          <TrackHeaders />
        </div>
      </div>
    </div>
    <div className="flex w-4 shrink-0 flex-col">
      <div className="flex h-[32px] flex-col items-end gap-[3px] bg-[#0d0c11]">
        <button aria-label="Arrangement" className="flex size-[13px] items-center justify-center rounded-full bg-[#a5abab]"><i className="size-[9px] rounded-full bg-[#eda350]" /></button>
        <button aria-label="Session" className="flex size-[13px] items-center justify-center rounded-full bg-[#a5abab]">
          <svg viewBox="0 0 8 8" className="size-2"><path d="M1 1v6M4 .5v7M7 1v6" stroke="#15161a" strokeWidth="1.500" /></svg>
        </button>
      </div>
      <div className="flex flex-1 flex-col items-center justify-end gap-[4px] rounded-r bg-[#b1b3a6] pb-[19px] pl-1">
        {sideToggles.map(([t, c]) => (
          <button key={t} className={`flex size-[9px] items-center justify-center rounded-full text-[5px] font-bold ${c}`}>{t}</button>
        ))}
      </div>
    </div>
  </main>
);

/* ---------- clip view ---------- */

const Pill = ({ children, className = '', dim }) => (
  <button className={`h-[9px] rounded-full border border-[#555] bg-[#b0b4b5] leading-[7px] ${dim ? 'text-[#6f7474]' : 'text-[#111]'} ${className}`}>{children}</button>
);

const Triple = ({ label, values = ['', '', ''] }) => (
  <div className="flex gap-px">
    <Field label={`${label} Takt`} value={values[0]} className="w-[15px] text-right" />
    <Field label={`${label} Zählzeit`} value={values[1]} className="w-[10px] text-right" />
    <Field label={`${label} Sechzehntel`} value={values[2]} className="w-[15px] text-right" />
  </div>
);

const Box = ({ title, children, className, lead, tail }) => (
  <section className={`flex flex-col bg-[#eceeee] ${className}`}>
    <h2 className="flex h-[11px] items-center gap-[3px] bg-[#68b043] pr-[3px] pl-[2px] font-['Roboto',sans-serif] text-[8px] leading-[11px] font-bold text-[#0e1a08] italic">
      {lead}
      <span className="flex-1">{title}</span>
      {tail}
    </h2>
    {children}
  </section>
);

const LoopColumn = ({ sets, values = [] }) => {
  const row = (t) => (
    <div className="flex h-[9px] items-center justify-between">{t}{sets && <Pill dim className="w-[15px] shrink-0">Set</Pill>}</div>
  );
  return (
    <div className="flex w-[42px] flex-col gap-[2px]">
      {row('Start')}
      <Triple label="Start" values={values[0]} />
      {row('End')}
      <Triple label="End" values={values[1]} />
      <div className="flex h-[9px] items-center"><hr className="w-full border-[#555]" /></div>
      <button className="h-[9px] border border-[#555] bg-[#b0b4b5] leading-[7px] text-[#6f7474]">Loop</button>
      {row('Position')}
      <Triple label="Position" values={values[2]} />
      {row('Length')}
      <Triple label="Length" values={values[3]} />
    </div>
  );
};

const masterEnv = [
  [0, 0.02, 0], [0.021, 0.02, 0], [0.022, 0.22, -0.6], [0.044, 0.36, -0.5], [0.062, 0.27, -0.5], [0.085, 0.45, -0.6], [0.097, 0.58, -0.75],
  [0.2, 0.62, -0.7], [0.235, 0.55, -0.8], [0.255, 0.68, -0.5], [0.29, 0.7, -0.35], [0.309, 0.8, -0.25], [0.311, 1.1, 0.15], [0.395, 1.08, 0.15],
  [0.4, 1.04, 0.22], [0.6, 1.04, 0.24], [0.8, 1.02, 0.2], [1, 1, 0.26],
];

const ClipView = () => (
  <section className="flex min-w-0 flex-1 gap-[4px] rounded-t rounded-bl bg-[#8f9796] p-[5px] text-[7px] leading-[9px] text-[#1a1a1a]">
    <div className="w-[45px] shrink-0">
      <Box title="Clip" className="h-[110px]" lead={<i className="size-[8px] rounded-full border border-[#3c6a22] bg-[#a9dc4a]" />}>
        <div className="flex flex-col gap-[2px] px-[2px] pt-[2px]">
          <Field value="Shadows" label="Clip-Name" className="w-full text-center" />
          <div className="relative">
            <select aria-label="Clip-Farbe" className="block h-[9px] w-full appearance-none border border-[#333] bg-[#68b043]" />
            <svg viewBox="0 0 6 6" className="pointer-events-none absolute top-[2px] right-[2px] size-[4px]"><path d="M0 .5h6L3 5.500z" /></svg>
          </div>
          <span className="pt-px leading-[9px]">Signature</span>
          <div className="flex items-center justify-between"><Field value="4" label="Zähler" className="w-[18px] text-center" />/<Field value="4" label="Nenner" className="w-[18px] text-center" /></div>
          <div className="mt-[3px] flex justify-between">Groove<svg viewBox="0 0 10 10" className="size-[9px]"><circle cx="5" cy="5" r="4.300" fill="#c5c8c8" stroke="#333" strokeWidth=".9" /><path d="M5 5V1.500" stroke="#777" /></svg></div>
          <Field value="None" label="Groove" className="w-full" />
          <Pill dim>Commit</Pill>
          <div className="mt-[4px] flex justify-between">
            <button className="h-[9px] w-[19px] rounded-l-full border border-[#555] bg-[#b0b4b5] leading-[7px] text-[#6f7474]">&lt;&lt;</button>
            <button className="h-[9px] w-[19px] rounded-r-full border border-[#555] bg-[#b0b4b5] leading-[7px] text-[#6f7474]">&gt;&gt;</button>
          </div>
        </div>
      </Box>
      <div className="flex gap-[4px] pt-[4px] pl-[2px]">
        {['L', 'E'].map((t) => (
          <button key={t} className="size-[9px] rounded-full bg-[#f7932e] text-[5px] leading-[9px] text-[#b06010]">{t}</button>
        ))}
      </div>
    </div>
    <Box title="Sample" className="w-[154px] shrink-0" tail={<Fold dir="arrow" fill="#c6f53a" label="Sample-Box" />}>
      <div className="flex px-[3px] pt-[2px]">
        <div className="flex w-[66px] flex-col gap-[2px] border-r border-[#555] pr-[3px]">
          <span>Shadows.wav</span>
          <span className="whitespace-nowrap">44.1 kHz 24 Bit 2 Ch</span>
          <div className="flex justify-between"><Pill className="w-[19px]">Edit</Pill><Pill className="w-[20px]">Save</Pill><Pill className="w-[19px]">Rev</Pill></div>
          <div className="flex justify-between">
            <button className="h-[9px] w-[19px] border border-[#333] bg-[#b7fb20] leading-[7px]">HiQ</button>
            <button className="h-[9px] w-[19px] border border-[#333] bg-[#b0b4b5] leading-[7px]">RAM</button>
          </div>
          <div className="flex h-[53px] justify-between">
            <div className="flex w-[34px] flex-col items-center">
              <span className="self-start">Transpose</span>
              <svg viewBox="0 0 20 22" className="mt-px h-[22px] w-[20px]">
                <path d="M5.500 19.500a8 8 0 1 1 9 0" fill="none" stroke="#222" strokeWidth="1.700" />
                <path d="M10 13V5" stroke="#222" strokeWidth="1.500" />
                <path d="M7 .5h6L10 4z" fill="#ddd" stroke="#222" strokeWidth=".8" />
              </svg>
              <span className="leading-2">0 st</span>
              <span className="mt-auto">Detune</span>
            </div>
            <svg viewBox="0 0 12 48" className="mt-[2px] h-[48px] w-3"><path d="M2 0v48" stroke="#111" strokeWidth="1.300" /><path d="M8.500 25v6L3.500 28z" fill="#ccc" stroke="#222" strokeWidth=".9" /></svg>
          </div>
          <div className="flex items-center justify-between">
            <Field value="0 ct" label="Detune" className="w-[30px] text-center" />
            <span className="whitespace-nowrap">0.00 dB</span>
          </div>
        </div>
        <div className="flex w-[39px] flex-col gap-[2px] border-r border-[#555] px-[3px]">
          <button className="h-[9px] border border-[#333] bg-[#b0b4b5] leading-[7px]">Warp</button>
          <button className="h-[9px] border border-[#777] bg-[#b0b4b5] leading-[7px] text-[#6f7474]">Slave</button>
          <span className="whitespace-nowrap">Seg. BPM</span>
          <Field value="139.00" label="Seg. BPM" className="w-full text-center" />
          <div className="flex justify-between"><Pill dim className="w-[15px]">:2</Pill><Pill dim className="w-[15px]">*2</Pill></div>
          <div className="relative h-[9px]">
            <select aria-label="Warp-Modus" className="block h-full w-full appearance-none border border-[#333] bg-white pl-px leading-[7px]"><option>Beats</option></select>
            <svg viewBox="0 0 6 6" className="pointer-events-none absolute top-[2px] right-[2px] size-[5px]"><path d="M0 0.5h6L3 5.5z" fill="#111" /></svg>
          </div>
        </div>
        <div className="pl-[2px]">
          <LoopColumn sets values={[['0', '1', '493'], ['4', '10', '829'], ['0', '1', '493'], ['0', '1', '727']]} />
        </div>
      </div>
    </Box>
    <Box title="Envelopes" className="w-[91px] shrink-0" tail={<Fold dir="arrow" label="Envelopes-Box" />}>
      <div className="flex px-[2px] pt-[2px]">
        <div className="flex w-[43px] flex-col gap-[2px] border-r border-[#555] pr-[3px]">
          <Select value="Clip" label="Gerät" />
          <Select value="Volume" label="Regler" />
          <span className="mt-auto">Region</span>
          <button className="h-[9px] border border-[#555] bg-white leading-[7px] text-[#888]">Linked</button>
        </div>
        <div className="pl-[3px]"><LoopColumn /></div>
      </div>
    </Box>
    <div className="ml-[1px] flex min-w-0 flex-1 flex-col bg-[#eceeee]">
      <div className="flex h-[20px] flex-col gap-[2px] pl-[6px]">
        <svg viewBox="0 0 7 8" className="h-[8px] w-[7px]"><path d="M1 .5h5v7H1zM1 4h5" fill="#bbb" stroke="#222" /></svg>
        <svg viewBox="0 0 6 7" className="h-[7px] w-[6px]"><path d="M1 .5v6L5 3.500z" fill="#ccc" stroke="#444" strokeWidth=".8" /></svg>
      </div>
      <div className="relative min-h-0 flex-1 bg-[#fafbfd]">
        <Waveform env={masterEnv} seed={61} width={817} height={92} className="h-[92px] w-full" />
        <i className="absolute inset-x-0 top-[46px] h-px bg-[#b5b9bd]" />
        <i className="absolute inset-y-0 left-[6px] w-px bg-[#555]" />
      </div>
      <div className="flex h-[11px] overflow-hidden bg-[#d8dadb] text-[7px] leading-3 text-[#333]">
        {['0:00', '0:20', '0:40', '1:00', '1:20', '1:40', '2:00', '2:20', '2:40', '3:00', '3:20', '3:40'].map((t, i) => (
          <span key={t} className={`relative pl-[2px] ${i === 11 ? 'flex-[56]' : 'flex-[69]'}`}>
            <i className="absolute top-0 left-0 h-[6px] w-px bg-[#777]" />
            {t}
          </span>
        ))}
      </div>
    </div>
  </section>
);

const InfoView = () => (
  <aside className="w-[134px] shrink-0 rounded border-[3px] border-[#8f9796] bg-[#eceeee] font-['Roboto',sans-serif] text-[7px] font-bold text-[#111]">
    <h2 className="bg-[#f8fafb] pl-[4px] text-[8px] leading-[11px] italic">Spur-Anzeige</h2>
    <p className="pt-[2px] pl-[4px] leading-[10px] whitespace-pre-line">
      {'Klicken und ziehen Sie, um einen\nZeitabschnitt zu selektieren, wählen\nSie dann einen Bearbeitungs-Befehl\naus dem Bearbeiten-Menü.\n\n[Alt + Strg + Drag] Anzeige scrollen'}
    </p>
  </aside>
);

const StatusBar = () => (
  <footer className="flex h-[21px] items-start pr-1.5 pl-[5px] font-['Roboto',sans-serif] text-[7px] font-bold text-[#111]">
    <button aria-label="Info ausblenden" className="w-[18px] pt-[5px]">
      <svg viewBox="0 0 14 14" className="size-[13px]"><circle cx="7" cy="7" r="6.500" fill="#8d9494" /><circle cx="7" cy="7" r="4.900" fill="#0d0c11" /><path d="M7 2.800l3 7H4z" fill="#b9bdbd" /></svg>
    </button>
    <div className="mt-[4px] flex h-[16px] flex-1 items-center gap-[7px] rounded border-[3px] border-[#8f9796] bg-[#eceeee] pl-[4px]">
      <span>Zeitabschnitt</span>
      <span>Start: 730.1.1</span>
      <span>Ende: 894.3.4+</span>
      <span>Länge: 164.2.3+&nbsp; (Dauer: 4:09:335)</span>
    </div>
    <div className="ml-[5px] h-[20px] w-[139px] rounded-b bg-[#8f9796] px-[3px] pt-[5px]">
      <svg viewBox="0 0 133 13" preserveAspectRatio="none" className="h-[13px] w-full">
        <rect width="115" height="13" fill="#f4f5f6" />
        <path d="M3 5l2-1 3-1 4-1h102v4H3zM3 9l5-2h106v5H8z" fill="#142d50" />
        <path d="M0 6.500h133" stroke="#8ea0b8" strokeWidth=".7" />
        <rect x="1" y="1" width="115" height="11" fill="none" stroke="#05070c" strokeWidth="2" />
        <path d="M117 2l2 1h3v8h-5zM124 3h3v2h5v1h-8zM124 8h3v1h5v2h-8z" fill="#142d50" />
        <path d="M117 6.500h6" stroke="#fff" strokeWidth="1" />
      </svg>
    </div>
    <button className="mt-[5px] ml-[4px] h-[15px] w-[34px] rounded bg-[#8f9796] text-center">5-Audio</button>
    <button aria-label="Detailansicht" className="mt-[5px] ml-[4px]">
      <svg viewBox="0 0 14 14" className="size-[13px]"><circle cx="7" cy="7" r="6.500" fill="#8d9494" /><circle cx="7" cy="7" r="4.900" fill="#b9bdbd" /><path d="M7 2.800l3 7H4z" fill="#0d0c11" /></svg>
    </button>
  </footer>
);

const App = () => (
  <div className="flex min-h-screen flex-col bg-[#0d0c11] font-['Liberation_Sans',sans-serif]">
    <TitleBar />
    <MenuBar />
    <Transport />
    <div className="mt-px flex gap-[6px] pr-1.5 pl-[5px]">
      <Browser />
      <Arrangement />
    </div>
    <div className="mt-[5px] flex gap-[5px] pr-1.5 pl-[5px]">
      <InfoView />
      <ClipView />
    </div>
    <StatusBar />
  </div>
);

export default App;
